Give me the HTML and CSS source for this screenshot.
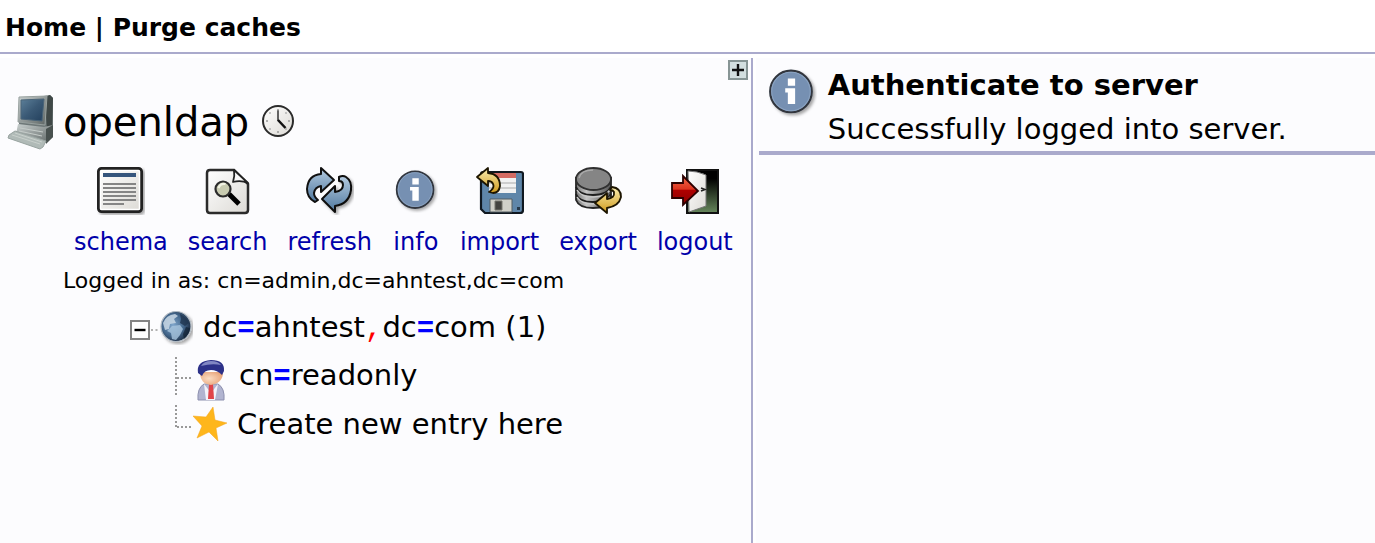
FILE: index.html
```html
<!DOCTYPE html>
<html lang="en">
<head>
    <meta charset="utf-8">
    <title>phpLDAPadmin</title>
    <link rel="stylesheet" href="styles.css">
</head>
<body>

    <!-- shared gradients and the info icon -->
    <svg class="defs" width="0" height="0" aria-hidden="true">
        <defs>
            <linearGradient id="paper" x1="0" y1="0" x2="1" y2="1">
                <stop offset="0" stop-color="#ffffff"/>
                <stop offset="1" stop-color="#dcdad5"/>
            </linearGradient>
            <linearGradient id="blue" x1="0" y1="0" x2="0" y2="1">
                <stop offset="0" stop-color="#b4cbe0"/>
                <stop offset="1" stop-color="#4f789f"/>
            </linearGradient>
            <linearGradient id="gold" x1="0" y1="0" x2="0" y2="1">
                <stop offset="0" stop-color="#fbeeb0"/>
                <stop offset="1" stop-color="#cf9a1c"/>
            </linearGradient>
            <linearGradient id="red" x1="0" y1="0" x2="0" y2="1">
                <stop offset="0" stop-color="#f26a4c"/>
                <stop offset="0.45" stop-color="#dd3520"/>
                <stop offset="0.5" stop-color="#ae0000"/>
                <stop offset="1" stop-color="#8c0000"/>
            </linearGradient>
            <linearGradient id="door" x1="0" y1="0" x2="0" y2="1">
                <stop offset="0.2" stop-color="#000000"/>
                <stop offset="1" stop-color="#67885c"/>
            </linearGradient>
            <linearGradient id="metal" x1="0" y1="0" x2="1" y2="0">
                <stop offset="0" stop-color="#777777"/>
                <stop offset="0.3" stop-color="#c4c4c4"/>
                <stop offset="1" stop-color="#555555"/>
            </linearGradient>
            <linearGradient id="screen" x1="0" y1="0" x2="1" y2="1">
                <stop offset="0" stop-color="#5c7f99"/>
                <stop offset="0.5" stop-color="#3a5975"/>
                <stop offset="1" stop-color="#23405d"/>
            </linearGradient>
            <linearGradient id="case" x1="0" y1="0" x2="1" y2="1">
                <stop offset="0" stop-color="#c9d0cf"/>
                <stop offset="1" stop-color="#5d6564"/>
            </linearGradient>
            <radialGradient id="sphere" cx="0.4" cy="0.45" r="0.6">
                <stop offset="0" stop-color="#7fa6cc"/>
                <stop offset="0.6" stop-color="#44678c"/>
                <stop offset="1" stop-color="#1e2f45"/>
            </radialGradient>
            <radialGradient id="skin" cx="0.4" cy="0.5" r="0.6">
                <stop offset="0" stop-color="#fbdcc2"/>
                <stop offset="1" stop-color="#e8a67c"/>
            </radialGradient>
            <filter id="shadow" x="-20%" y="-20%" width="150%" height="150%">
                <feDropShadow dx="2" dy="2" stdDeviation="1.5" flood-color="#000000" flood-opacity="0.35"/>
            </filter>
        </defs>
        <symbol id="icon-info" viewBox="0 0 48 48">
            <circle cx="23" cy="22.500" r="20" fill="#7690b2" stroke="#30363e" stroke-width="2" filter="url(#shadow)"/>
            <circle cx="23" cy="22.500" r="18.500" fill="none" stroke="#8ba3c1" stroke-width="1"/>
            <path d="M20 10h7v7h-7zM17.500 19.500h9.500v15h-7v-11h-2.500z" fill="#ffffff"/>
        </symbol>
    </svg>

    <header class="top-bar">
        <a href="#">Home</a> | <a href="#">Purge caches</a>
    </header>

    <div class="layout">
        <nav class="sidebar">
            <div class="expand-row">
                <button class="expand" type="button" aria-label="Expand">
                    <svg viewBox="0 0 16 16"><path d="M2 8h12M8 2v12" stroke="#111111" stroke-width="2.400"/></svg>
                </button>
            </div>

            <div class="server">
                <svg class="server-icon" viewBox="0 0 48 56">
                    <path d="M13 6L44 1l3 3v31l-7 4-27-4z" fill="#6e7878"/>
                    <path d="M39 3l5-2 3 3-1 30-5 4z" fill="#3f4847"/>
                    <path d="M13 3L41 2l-2 29-27-3z" fill="url(#case)" stroke="#98a19f" stroke-width="1"/>
                    <path d="M15 6l23-1-2 22-21-2z" fill="url(#screen)" stroke="#4a6478" stroke-width="1"/>
                    <path d="M12 30l26 3 9-2v12l-7 6-30-9z" fill="url(#case)"/>
                    <path d="M40 35l7-4v12l-7 7z" fill="#48514f"/>
                    <path d="M14 34l23 4M13 37l23 5" stroke="#c5ccc9" stroke-width="1"/>
                    <path d="M3 41l6-4 31 10-3 6-3 2L2 44z" fill="#b0bab7" stroke="#98a3a0" stroke-width="1"/>
                    <path d="M6 41l28 9M9 39l27 9" stroke="#c9d0cc" stroke-width="1"/>
                </svg>
                <h1>openldap</h1>
                <svg class="clock" viewBox="0 0 34 34">
                    <circle cx="17" cy="16" r="15" fill="url(#paper)" stroke="#2b2b2b" stroke-width="2"/>
                    <path d="M17 4v2M17 26v2M5 16h2M27 16h2M8.500 7.500l1 1M25.500 7.500l-1 1M8.500 24.500l1-1M25.500 24.500l-1-1" stroke="#999999" stroke-width="1.500"/>
                    <path d="M17 5.500V16" stroke="#333333" stroke-width="1.500"/>
                    <path d="M17 15l7.500 8" stroke="#111111" stroke-width="2.500"/>
                </svg>
            </div>

            <div class="toolbar">
                <a href="#">
                    <svg viewBox="0 0 48 48">
                        <rect x="1.500" y="1.500" width="43" height="43" rx="3" fill="url(#paper)" stroke="#222222" stroke-width="3" filter="url(#shadow)"/>
                        <rect x="3.500" y="3.500" width="39" height="39" rx="1" fill="none" stroke="#ffffff" stroke-width="1.500"/>
                        <rect x="6" y="6" width="33" height="4" fill="#35557c"/>
                        <path d="M6 17h33M6 21h33M6 25h33M6 29h33M6 33h33M6 37h21" stroke="#858585" stroke-width="1.800"/>
                    </svg>
                    schema
                </a>
                <a href="#">
                    <svg viewBox="0 0 48 48">
                        <path d="M6 3h24l14 14v26q0 3-3 3H6q-3 0-3-3V6q0-3 3-3z" fill="url(#paper)" stroke="#2b2b2b" stroke-width="2.500"/>
                        <path d="M30 3q1 6-1 12 8-2 15 1z" fill="#f8f8f8" stroke="#222222" stroke-width="1.800" stroke-linejoin="round"/>
                        <path d="M25 27l10 10" stroke="#000000" stroke-width="5"/>
                        <circle cx="19" cy="22" r="7.500" fill="#c8cbb0" stroke="#2b2b2b" stroke-width="2.200"/>
                        <path d="M14.500 21q2-5 7-4" fill="none" stroke="#f2f3e4" stroke-width="2.200"/>
                    </svg>
                    search
                </a>
                <a href="#">
                    <svg viewBox="0 0 48 48">
                        <path d="M15 1L28 13 15 25V19Q9 20 8 26q0 4 4 7l-3 2Q1 31 1 22 2 8 15 7z" fill="url(#blue)" stroke="#111111" stroke-width="2" stroke-linejoin="round"/>
                        <path d="M33 10q4-2 7 0 6 4 5 13-2 14-16 16v6L16 32l13-13v6q8-1 8-7 0-4-4-4z" fill="url(#blue)" stroke="#111111" stroke-width="2" stroke-linejoin="round" filter="url(#shadow)"/>
                    </svg>
                    refresh
                </a>
                <a href="#">
                    <svg class="small-info"><use href="#icon-info"/></svg>
                    info
                </a>
                <a href="#">
                    <svg viewBox="0 0 48 48">
                        <path d="M7 5h38q2 0 2 2v36q0 3-3 3H9l-4-4V7q0-2 2-2z" fill="#5f86a9" stroke="#101820" stroke-width="2.200"/>
                        <path d="M13 6h27v20H13z" fill="#f2f2f2"/>
                        <path d="M13 6h27v5H13z" fill="#d46b63"/>
                        <path d="M13 16h27M13 21h27" stroke="#aaaaaa" stroke-width="1"/>
                        <path d="M14 32h22v13H14z" fill="#d0d0c8" stroke="#525c62" stroke-width="1"/>
                        <path d="M19 34h7v9h-7z" fill="#444440" stroke="#77776f" stroke-width="1"/>
                        <path d="M41 40h3v3h-3z" fill="#26384a"/>
                        <path d="M1 10L12 1v5q12 1 12 13-1 7-7 7l-4-1q6-4 4-8-1-3-5-3v5z" fill="url(#gold)" stroke="#1d1500" stroke-width="1.800" stroke-linejoin="round"/>
                    </svg>
                    import
                </a>
                <a href="#">
                    <svg viewBox="0 0 48 48">
                        <path d="M2 11v22q3 8 17 8t18-8V11z" fill="url(#metal)" stroke="#252525" stroke-width="1.800"/>
                        <path d="M2 20q3 8 17 8t18-8M2 27q3 8 17 8t18-8" fill="none" stroke="#1f1f1f" stroke-width="1.800"/>
                        <path d="M3 23q4 7 16 7t17-7M3 30q4 7 16 7t17-7" fill="none" stroke="#c8c8c8" stroke-width="1.500"/>
                        <ellipse cx="19.500" cy="12" rx="17.500" ry="11" fill="#858585" stroke="#303030" stroke-width="1.800"/>
                        <path d="M5 11q2-8 14-8" fill="none" stroke="#aaaaaa" stroke-width="1.500"/>
                        <path d="M38 20q9 1 9 10-2 9-14 11v5L21 36l12-10v6q8-1 7-7-1-2-4-2z" fill="url(#gold)" stroke="#1d1500" stroke-width="1.800" stroke-linejoin="round"/>
                    </svg>
                    export
                </a>
                <a href="#">
                    <svg viewBox="0 0 48 48">
                        <rect x="16" y="3" width="31" height="43" fill="url(#door)" stroke="#111111" stroke-width="2"/>
                        <path d="M17 4q9 0 18 4v31l-17 6z" fill="url(#paper)" stroke="#777777" stroke-width="1"/>
                        <path d="M30 21l4 1.500-4 1.500" fill="none" stroke="#222222" stroke-width="1.500"/>
                        <path d="M1 16h11V9l15 15-15 14v-7H1z" fill="url(#red)" stroke="#2d0000" stroke-width="1.800"/>
                    </svg>
                    logout
                </a>
            </div>

            <p class="logged-in">Logged in as: cn=admin,dc=ahntest,dc=com</p>

            <ul class="tree">
                <li>
                    <svg class="node-line" viewBox="0 0 30 48">
                        <rect x="2" y="17" width="18" height="18" fill="#ffffff" stroke="#858585" stroke-width="2"/>
                        <path d="M5.500 26h11" stroke="#000000" stroke-width="2.400"/>
                        <path d="M22 26h8" stroke="#999999" stroke-width="1.500" stroke-dasharray="2 2.500"/>
                    </svg>
                    <svg class="node-icon" viewBox="0 0 34 34">
                        <circle cx="17" cy="15.500" r="15" fill="url(#sphere)" stroke="#b3bcc5" stroke-width="1.200" filter="url(#shadow)"/>
                        <path d="M4 12q3-8 12-9l3 2-4 3 2 4-6 1-1 5-4 1z" fill="#c9d8e5" opacity="0.850"/>
                        <path d="M13 15l8-1 3 4-3 6-4 5-4-1-1-6-4-2z" fill="#a9c6df" opacity="0.800"/>
                        <path d="M21 3q7 3 9 9l-4 3-5-3 1-4z" fill="#1f344f" opacity="0.800"/>
                        <path d="M27 16l4 1q-1 7-6 11l-1-5z" fill="#132235" opacity="0.700"/>
                    </svg>
                    <a href="#">dc<b class="eq">=</b>ahntest<span class="comma">,</span>dc<b class="eq">=</b>com (1)</a>
                </li>
                <li class="child">
                    <svg class="child-line" viewBox="0 0 18 48">
                        <path d="M1 5v38" stroke="#999999" stroke-width="2" stroke-dasharray="2 2"/>
                        <path d="M2 26h16" stroke="#999999" stroke-width="2" stroke-dasharray="2 2"/>
                    </svg>
                    <svg class="node-icon person" viewBox="0 0 34 42">
                        <path d="M5 41q-1-12 6-16h14q7 4 6 16z" fill="#b1b4d0" stroke="#8c8fae" stroke-width="1"/>
                        <path d="M11 25l7 9 7-9-3 16h-9z" fill="#f3f3fa"/>
                        <path d="M16 25h4l1 15h-6z" fill="#e04449"/>
                        <path d="M7 13q0 12 11 13 12-2 12-13z" fill="url(#skin)"/>
                        <path d="M5 14q-2-12 13-13 14 0 13 11l-2 4q-5-5-11-5-7 0-9 6z" fill="#2c3189"/>
                        <path d="M8 7q3-5 10-5t10 4q-9-2-20 1z" fill="#8187c3"/>
                    </svg>
                    <a href="#">cn<b class="eq">=</b>readonly</a>
                </li>
                <li class="child">
                    <svg class="child-line" viewBox="0 0 18 48">
                        <path d="M1 5v22" stroke="#999999" stroke-width="2" stroke-dasharray="2 2"/>
                        <path d="M2 27h16" stroke="#999999" stroke-width="2" stroke-dasharray="2 2"/>
                    </svg>
                    <svg class="node-icon star" viewBox="0 0 34 34">
                        <path d="M20 0l2 13 12 3-11 5 2 13-9-9-12 6 5-12L0 9l13 1z" fill="#feb61c" stroke="#f5a51a" stroke-width="0.500"/>
                    </svg>
                    <a href="#">Create new entry here</a>
                </li>
            </ul>
        </nav>

        <main class="content">
            <div class="message">
                <svg class="message-icon"><use href="#icon-info"/></svg>
                <div>
                    <h2>Authenticate to server</h2>
                    <p>Successfully logged into server.</p>
                </div>
            </div>
        </main>
    </div>

</body>
</html>
```

FILE: styles.css
```css
* {
    margin: 0;
    padding: 0;
    box-sizing: border-box;
}

body {
    display: flex;
    flex-direction: column;
    min-height: 100vh;
    font-family: "DejaVu Sans", Verdana, sans-serif;
    font-size: 29px;
    color: #000;
    background: #fff;
}

a {
    color: inherit;
    text-decoration: none;
}

svg {
    display: block;
    flex: none;
}

.defs {
    position: absolute;
}

.top-bar {
    padding: 10px 5px 6px;
    border-bottom: 2px solid #aaaacc;
    font-size: 25px;
    font-weight: bold;
    line-height: 36px;
}

.layout {
    display: flex;
    flex: 1;
    gap: 3px;
    margin-top: 4px;
}

/* left tree */

.sidebar {
    flex: none;
    background: #fcfcfe;
    border-right: 2px solid #aaaacc;
}

.expand-row {
    display: flex;
    justify-content: flex-end;
    padding: 2px 3px 0;
}

.expand {
    width: 20px;
    height: 20px;
    border: 2px solid #879595;
    background: #d3dfe0;
    cursor: pointer;
}

.expand svg {
    width: 16px;
    height: 16px;
}

.server {
    display: flex;
    align-items: center;
    margin-top: 14px;
    padding-left: 6px;
}

.server-icon {
    width: 48px;
    height: 56px;
}

.server h1 {
    margin: 0 12px 0 9px;
    font-size: 40px;
    font-weight: normal;
    line-height: 48px;
}

.clock {
    width: 34px;
    height: 34px;
}

.toolbar {
    display: flex;
    gap: 20px;
    margin-top: 17px;
    padding: 0 18px 0 74px;
    font-size: 24px;
    line-height: 28px;
    color: #0000aa;
}

.toolbar a {
    display: flex;
    flex-direction: column;
    align-items: center;
}

.toolbar svg {
    width: 48px;
    height: 48px;
    margin-bottom: 13px;
}

.toolbar .small-info {
    padding: 2px;
}

.toolbar a:hover,
.tree a:hover {
    text-decoration: underline;
}

.logged-in {
    margin-top: 12px;
    padding-left: 63px;
    font-size: 22px;
    line-height: 26px;
}

.tree {
    margin-top: 10px;
    padding-left: 129px;
    list-style: none;
}

.tree li {
    display: flex;
    align-items: center;
    height: 48px;
}

.tree .child {
    padding-left: 46px;
}

.node-line {
    width: 30px;
    height: 48px;
}

.child-line {
    width: 18px;
    height: 48px;
}

.node-icon {
    width: 34px;
    height: 34px;
    margin-right: 10px;
}

.person {
    height: 42px;
    margin-top: 8px;
    margin-right: 12px;
}

.tree .eq,
.tree .comma {
    font-family: "Liberation Mono", monospace;
}

.eq {
    color: #00f;
}

.comma {
    color: #f00;
}

/* right side */

.content {
    flex: 1;
    padding: 5px 0 0 3px;
    background: #fcfcfe;
}

.message {
    display: flex;
    gap: 11px;
    padding-left: 8px;
    border-bottom: 4px solid #aaaacc;
    line-height: 44px;
}

.message h2 {
    font-size: 29px;
}

.message-icon {
    width: 50px;
    height: 50px;
    margin-top: 5px;
}
```
